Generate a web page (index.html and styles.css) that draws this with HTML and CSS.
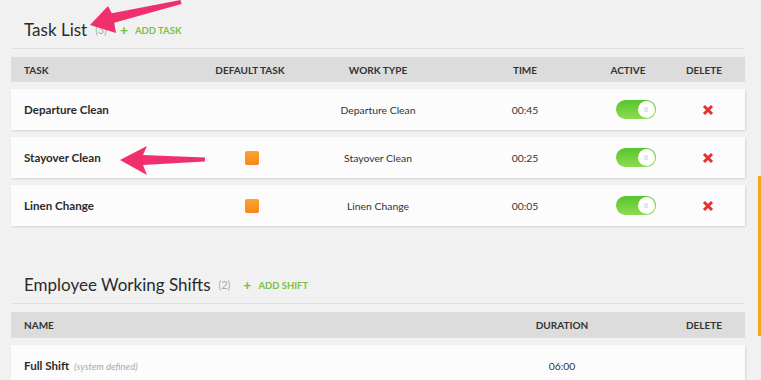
FILE: index.html
```html
<!DOCTYPE html>
<html lang="en">
<head>
	<meta charset="UTF-8">
	<title>Tasks and Shifts</title>
	<link rel="stylesheet" href="styles.css">
</head>
<body>
	<div class="page">

		<section class="block">
			<div class="block-head">
				<h2>Task List</h2>
				<span class="count">(3)</span>
				<a class="add" href="#"><span class="plus">+</span>ADD TASK</a>
			</div>
			<div class="grid tasks head-row">
				<div class="left">TASK</div>
				<div>DEFAULT TASK</div>
				<div>WORK TYPE</div>
				<div>TIME</div>
				<div>ACTIVE</div>
				<div>DELETE</div>
			</div>
			<div class="grid tasks row">
				<div class="left name">Departure Clean</div>
				<div></div>
				<div>Departure Clean</div>
				<div>00:45</div>
				<div><span class="toggle"><span class="knob"></span></span></div>
				<div><svg class="del" viewBox="0 0 12 12"><path d="M2 2 L10 10 M10 2 L2 10"/></svg></div>
			</div>
			<div class="grid tasks row">
				<div class="left name">Stayover Clean</div>
				<div><span class="default-box"></span></div>
				<div>Stayover Clean</div>
				<div>00:25</div>
				<div><span class="toggle"><span class="knob"></span></span></div>
				<div><svg class="del" viewBox="0 0 12 12"><path d="M2 2 L10 10 M10 2 L2 10"/></svg></div>
			</div>
			<div class="grid tasks row">
				<div class="left name">Linen Change</div>
				<div><span class="default-box"></span></div>
				<div>Linen Change</div>
				<div>00:05</div>
				<div><span class="toggle"><span class="knob"></span></span></div>
				<div><svg class="del" viewBox="0 0 12 12"><path d="M2 2 L10 10 M10 2 L2 10"/></svg></div>
			</div>
		</section>

		<section class="block shifts-block">
			<div class="block-head">
				<h2>Employee Working Shifts</h2>
				<span class="count">(2)</span>
				<a class="add" href="#"><span class="plus">+</span>ADD SHIFT</a>
			</div>
			<div class="grid shifts head-row tall">
				<div class="left">NAME</div>
				<div>DURATION</div>
				<div>DELETE</div>
			</div>
			<div class="grid shifts row">
				<div class="left name">Full Shift <em class="note">(system defined)</em></div>
				<div>06:00</div>
				<div></div>
			</div>
		</section>

		<!-- annotation arrows drawn over the screenshot -->
		<svg class="arrows" viewBox="0 0 761 380">
			<polygon points="90,25 108,6 111.8,13.2 180.5,0 181.5,4 114.2,22.8 116,33"/>
			<polygon points="120,160 147,146 143,155 205,157.5 205,161.5 143,165 147,175"/>
		</svg>
		<div class="edge"></div>
	</div>
</body>
</html>
```

FILE: styles.css
```css
body {
	margin: 0;
	padding: 0;
	background-color: #f1f1f1;
	font-family: Lato, "Open Sans", sans-serif;
	color: #333;
}
.page {
	position: relative;
	width: 761px;
	height: 380px;
	overflow: hidden;
	padding-left: 11px;
	box-sizing: border-box;
}
.block {
	width: 734px;
}
.block-head {
	display: flex;
	align-items: center;
	height: 22px;
	padding: 18px 0 8px 13px;
	border-bottom: 1px solid #e0e0e0;
}
.block-head h2 {
	margin: 0;
	font-size: 17px;
	font-weight: 400;
	color: #2b2b2b;
}
.count {
	margin-left: 8px;
	font-size: 10.5px;
	color: #aaa;
	padding-top: 2px;
}
.add {
	display: flex;
	align-items: center;
	margin-left: 13px;
	font-size: 9.5px;
	font-weight: 700;
	color: #7cc142;
	text-decoration: none;
	padding-top: 2px;
}
.plus {
	font-size: 14px;
	font-weight: 900;
	margin-right: 7px;
	margin-top: -2px;
}
.grid {
	display: grid;
	align-items: center;
	text-align: center;
}
.tasks {
	grid-template-columns: 190px 98px 158px 136px 70px 82px;
}
.shifts {
	grid-template-columns: 450px 202px 82px;
}
.left {
	text-align: left;
	padding-left: 13px;
}
.head-row {
	margin-top: 8px;
	height: 25px;
	background-color: #dcdcdc;
	font-size: 10px;
	font-weight: 700;
	color: #333;
}
.head-row.tall {
	height: 26px;
}
.row {
	margin-top: 7px;
	height: 41px;
	background-color: #fcfcfc;
	box-shadow: 1px 1px 2px rgba(0,0,0,0.12);
	font-size: 10.4px;
	color: #333;
}
.name {
	font-size: 11.6px;
	font-weight: 700;
	color: #2b2b2b;
}
.note {
	font-size: 9.5px;
	font-weight: 400;
	color: #aaa;
	margin-left: 2px;
}
.default-box {
	display: inline-block;
	width: 14px;
	height: 14px;
	margin-left: 4px;
	border-radius: 2px;
	background: linear-gradient(#fba52e, #f7861a);
	vertical-align: middle;
}
.toggle {
	display: inline-block;
	position: relative;
	width: 40px;
	height: 19px;
	margin-left: 16px;
	border-radius: 10px;
	background: linear-gradient(#55c62d, #8fdb4f);
	vertical-align: middle;
}
.knob {
	position: absolute;
	top: 1px;
	right: 1px;
	width: 17px;
	height: 17px;
	border-radius: 50%;
	background-color: #fff;
}
.knob::after {
	content: "";
	position: absolute;
	left: 6px;
	top: 6px;
	width: 4px;
	height: 5px;
	background-color: #e6e6e6;
}
.del {
	width: 12px;
	height: 12px;
	margin-left: 7px;
	vertical-align: middle;
	fill: none;
	stroke: #e53131;
	stroke-width: 3;
}
.shifts-block {
	margin-top: 29px;
}
.arrows {
	position: absolute;
	left: 0;
	top: 0;
	width: 761px;
	height: 380px;
	fill: #f0306c;
	pointer-events: none;
}
.edge {
	position: absolute;
	left: 758px;
	top: 176px;
	width: 3px;
	height: 160px;
	background-color: #f6a623;
}
```
